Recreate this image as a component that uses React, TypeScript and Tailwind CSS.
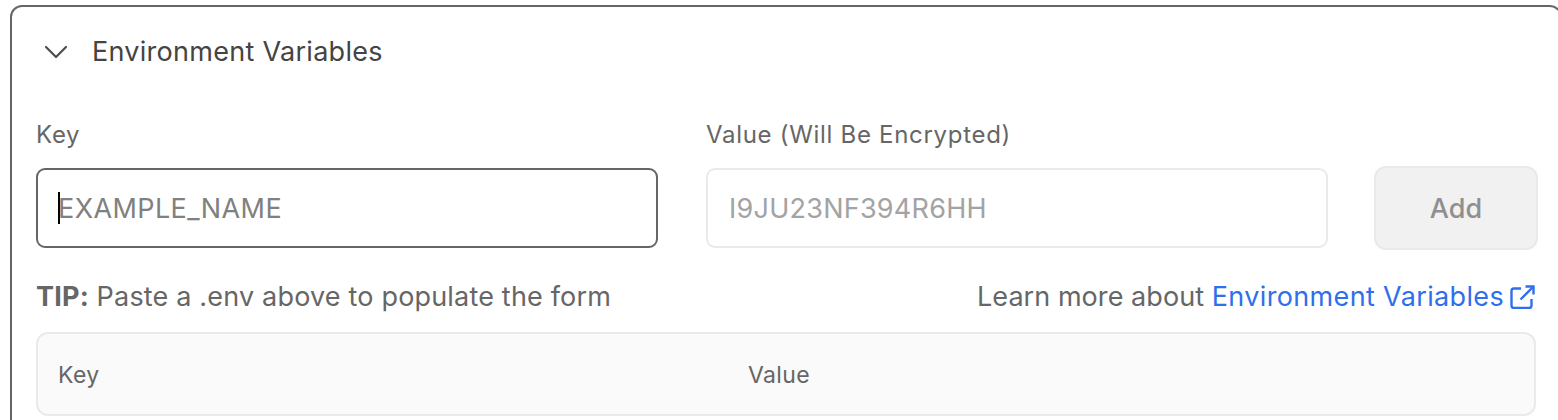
import React from 'react';
import { ChevronDown } from 'lucide-react';

const font = 'font-["Inter",sans-serif]';

export default function App() {
  return (
    <div className={`h-[420px] w-[1558px] overflow-hidden bg-white pl-[10px] pt-[5px] ${font}`}>
      <div className="h-[460px] w-[1552px] rounded-[12px] border-2 border-[#666666] bg-white pl-[24px]">
        {/* Header */}
        <div className="flex h-[112px] items-center pb-[23px]">
          <ChevronDown size={40} strokeWidth={1.3} className="text-[#4d4d4d]" />
          <span className="ml-[16px] pt-[2px] text-[27px] tracking-[0.28px] text-[#444444]">Environment Variables</span>
        </div>

        {/* Form */}
        <div className="flex items-end">
          <div className="w-[622px]">
            <label className="block text-[24px] leading-[32px] tracking-[0.7px] text-[#666666]">Key</label>
            <div className="mt-[17px] flex h-[80px] items-center rounded-[9px] border-2 border-[#666666] pl-[20px]">
              <span className="h-[32px] w-[2px] shrink-0 bg-black" />
              <span className="ml-[-2px] pt-[2px] text-[27px] tracking-[0.4px] text-[#808080]">EXAMPLE_NAME</span>
            </div>
          </div>
          <div className="ml-[48px] w-[622px]">
            <label className="block text-[24px] leading-[32px] tracking-[0.7px] text-[#666666]">Value (Will Be Encrypted)</label>
            <div className="mt-[17px] flex h-[80px] items-center rounded-[9px] border-2 border-[#eaeaea] pl-[21px]">
              <span className="pt-[2px] text-[27px] tracking-[0.25px] text-[#a3a3a3]">I9JU23NF394R6HH</span>
            </div>
          </div>
          <button className="mb-[-2px] ml-[46px] flex h-[84px] w-[164px] items-center justify-center rounded-[12px] border-2 border-[#eaeaea] bg-[#f1f1f1] pt-[2px] text-[27px] font-medium text-[#8f8f8f]">
            Add
          </button>
        </div>

        {/* Tip row */}
        <div className="mt-[32px] flex w-[1499px] items-center justify-between text-[27px] leading-[34px] tracking-[0.18px] text-[#666666]">
          <span>
            <b className="font-bold">TIP:</b> Paste a .env above to populate the form
          </span>
          <span className="flex items-center tracking-[0.06px]">
            Learn more about&nbsp;<span className="tracking-[0.35px] text-[#2f6fed]">Environment Variables</span>
            <svg width="25" height="24" viewBox="0 0 25 24" fill="none" stroke="#2f6fed" strokeWidth="2.4" className="ml-[6px]">
              <path d="M11 3.5H4a2.5 2.5 0 0 0-2.5 2.5v14.5A2.5 2.5 0 0 0 4 23h15a2.5 2.5 0 0 0 2.5-2.5V14" />
              <path d="M15.5 1.5h8v8" />
              <path d="M23.5 1.5 10.5 14.5" />
            </svg>
          </span>
        </div>

        {/* Table header */}
        <div className="mt-[18px] flex h-[84px] w-[1500px] items-center rounded-[12px] border-2 border-[#eaeaea] bg-[#fafafa] pl-[20px] pt-[3px] text-[23px] tracking-[0.35px] text-[#666666]">
          <span className="w-[690px]">Key</span>
          <span>Value</span>
        </div>
      </div>
    </div>
  );
}
